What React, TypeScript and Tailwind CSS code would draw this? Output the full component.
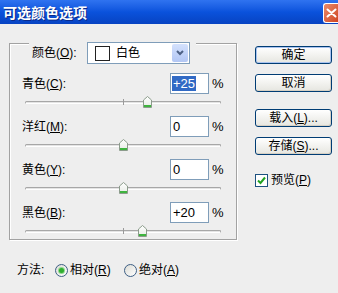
import React from 'react';

const FONT = "font-['Liberation_Sans','Noto_Sans_CJK_SC',sans-serif]";

function Mn({ children }: { children: React.ReactNode }) {
  return <span className="underline underline-offset-[1px]">{children}</span>;
}

function Thumb() {
  return (
    <svg width="9" height="12" viewBox="0 0 9 12">
      <defs>
        <linearGradient id="tg" x1="0" y1="0" x2="0" y2="1">
          <stop offset="0" stopColor="#ffffff" />
          <stop offset="1" stopColor="#e6ebe4" />
        </linearGradient>
      </defs>
      <path d="M0.5 4 L4.5 0.5 L8.5 4 L8.5 11.5 L0.5 11.5 Z" fill="url(#tg)" stroke="#8c9c8c" />
      <rect x="1" y="9" width="7" height="2" fill="#3fb43f" />
    </svg>
  );
}

function Slider({ value }: { value: number }) {
  // track is 196px wide, 0 sits at the middle
  const left = 98 + (value / 100) * 98 - 4.5;
  return (
    <div className="relative ml-[15px] mt-[2px] w-[196px] h-[13px]">
      <div className="absolute left-0 right-0 top-[5px] h-[3px] rounded-full border border-[#a7a7a7] border-b-[#ffffff] bg-[#e4e4e4]" />
      <div className="absolute left-[98px] top-[3px] w-px h-[6px] bg-[#9a9a9a]" />
      <div className="absolute top-0" style={{ left }}>
        <Thumb />
      </div>
    </div>
  );
}

function ColorRow({
  name,
  mn,
  value,
  selected,
  num,
  first,
}: {
  name: string;
  mn: string;
  value: string;
  selected?: boolean;
  num: number;
  first?: boolean;
}) {
  return (
    <div className={first ? 'mt-[9px]' : 'mt-[7px]'}>
      <div className="flex items-center h-[21px]">
        <div className="w-[160px] pl-[12px]">
          {name}(<Mn>{mn}</Mn>):
        </div>
        <div className="w-[39px] h-[21px] border border-[#7f9db9] bg-white flex items-center pl-[1px] text-[13px]">
          {selected ? <span className="bg-[#316ac5] text-white px-px leading-[15px]">{value}</span> : <span className="pl-px">{value}</span>}
        </div>
        <div className="ml-[3px] text-[13px]">%</div>
      </div>
      <Slider value={num} />
    </div>
  );
}

function XpButton({ children, primary }: { children: React.ReactNode; primary?: boolean }) {
  return (
    <button
      className={`w-[77px] h-[18px] flex items-center justify-center rounded-[3px] border border-[#003c74] bg-linear-to-b from-[#ffffff] to-[#e6e6e0] text-[12px] leading-none ${
        primary ? 'shadow-[inset_0_0_0_1px_#a9c3ef]' : 'shadow-[inset_-1px_-1px_0_#d6d0c4]'
      }`}
    >
      {children}
    </button>
  );
}

function Radio({ checked }: { checked?: boolean }) {
  return (
    <span className="w-[13px] h-[13px] rounded-full border border-[#3d5f85] bg-linear-to-br from-[#dcdcd6] to-[#ffffff] flex items-center justify-center">
      {checked && <span className="w-[5px] h-[5px] rounded-full bg-[#2fae2f] shadow-[0_0_0_1px_#8fd88f]" />}
    </span>
  );
}

export default function App() {
  return (
    <div className={`w-[338px] h-[293px] overflow-hidden bg-[#eeeeee] text-[12px] text-black ${FONT}`}>
      {/* Title bar */}
      <div className="h-[24px] flex items-center justify-between bg-linear-to-b from-[#2f73f0] via-[#0a52dc] to-[#0743c2]">
        <div className="pl-[3px] text-[14px] font-bold text-white font-['Noto_Sans_CJK_SC',sans-serif] [text-shadow:1px_1px_0_#0a2a8a]">
          可选颜色选项
        </div>
        <div className="w-[15px] h-[20px] mt-px rounded-l-[3px] border-l border-y border-white bg-linear-to-br from-[#e98a6a] to-[#cf4420] flex items-center justify-end pr-px">
          <svg width="11" height="10" viewBox="0 0 11 10">
            <path d="M1.5 1.5 L9.5 8.5 M9.5 1.5 L1.5 8.5" stroke="#ffffff" strokeWidth="2" strokeLinecap="round" />
          </svg>
        </div>
      </div>

      <div className="flex pl-[9px] pt-[19px]">
        {/* Group box */}
        <div className="w-[228px] h-[197px] border border-[#a2a2a2] shadow-[inset_1px_1px_0_#ffffff,1px_1px_0_#ffffff]">
          <div className="-mt-[9px] ml-[19px] inline-flex items-center bg-[#eeeeee] pl-[3px] pr-[6px] h-[22px]">
            <span className="w-[55px]">
              颜色(<Mn>O</Mn>):
            </span>
            <div className="w-[103px] h-[22px] border border-[#7f9db9] bg-white flex items-center">
              <span className="ml-[7px] w-[15px] h-[15px] border border-[#222222] bg-white" />
              <span className="ml-[6px]">白色</span>
              <span className="ml-auto mr-px w-[16px] h-[18px] rounded-[2px] bg-linear-to-b from-[#d4e1fd] to-[#b2c6f4] flex items-center justify-center">
                <svg width="8" height="6" viewBox="0 0 8 6">
                  <path d="M1 1 L4 4 L7 1" fill="none" stroke="#4d6185" strokeWidth="2" />
                </svg>
              </span>
            </div>
          </div>
          <ColorRow name="青色" mn="C" value="+25" selected num={25} first />
          <ColorRow name="洋红" mn="M" value="0" num={0} />
          <ColorRow name="黄色" mn="Y" value="0" num={0} />
          <ColorRow name="黑色" mn="B" value="+20" num={20} />
        </div>

        {/* Buttons */}
        <div className="ml-[18px] pt-[3px] flex flex-col">
          <XpButton primary>确定</XpButton>
          <div className="mt-[10px]">
            <XpButton>取消</XpButton>
          </div>
          <div className="mt-[17px]">
            <XpButton>
              载入(<Mn>L</Mn>)...
            </XpButton>
          </div>
          <div className="mt-[10px]">
            <XpButton>
              存储(<Mn>S</Mn>)...
            </XpButton>
          </div>
          <div className="mt-[16px] flex items-center">
            <span className="w-[13px] h-[13px] border border-[#1c5180] bg-white flex items-center justify-center">
              <svg width="9" height="9" viewBox="0 0 9 9">
                <path d="M1 4.5 L3.5 7 L8 1.5" fill="none" stroke="#21a121" strokeWidth="2" />
              </svg>
            </span>
            <span className="ml-[3px]">
              预览(<Mn>P</Mn>)
            </span>
          </div>
        </div>
      </div>

      {/* Method */}
      <div className="mt-[22px] pl-[17px] flex items-center h-[16px]">
        <span className="w-[38px]">方法:</span>
        <Radio checked />
        <span className="ml-[2px] w-[42px]">
          相对(<Mn>R</Mn>)
        </span>
        <span className="ml-[12px]">
          <Radio />
        </span>
        <span className="ml-[2px]">
          绝对(<Mn>A</Mn>)
        </span>
      </div>
    </div>
  );
}
